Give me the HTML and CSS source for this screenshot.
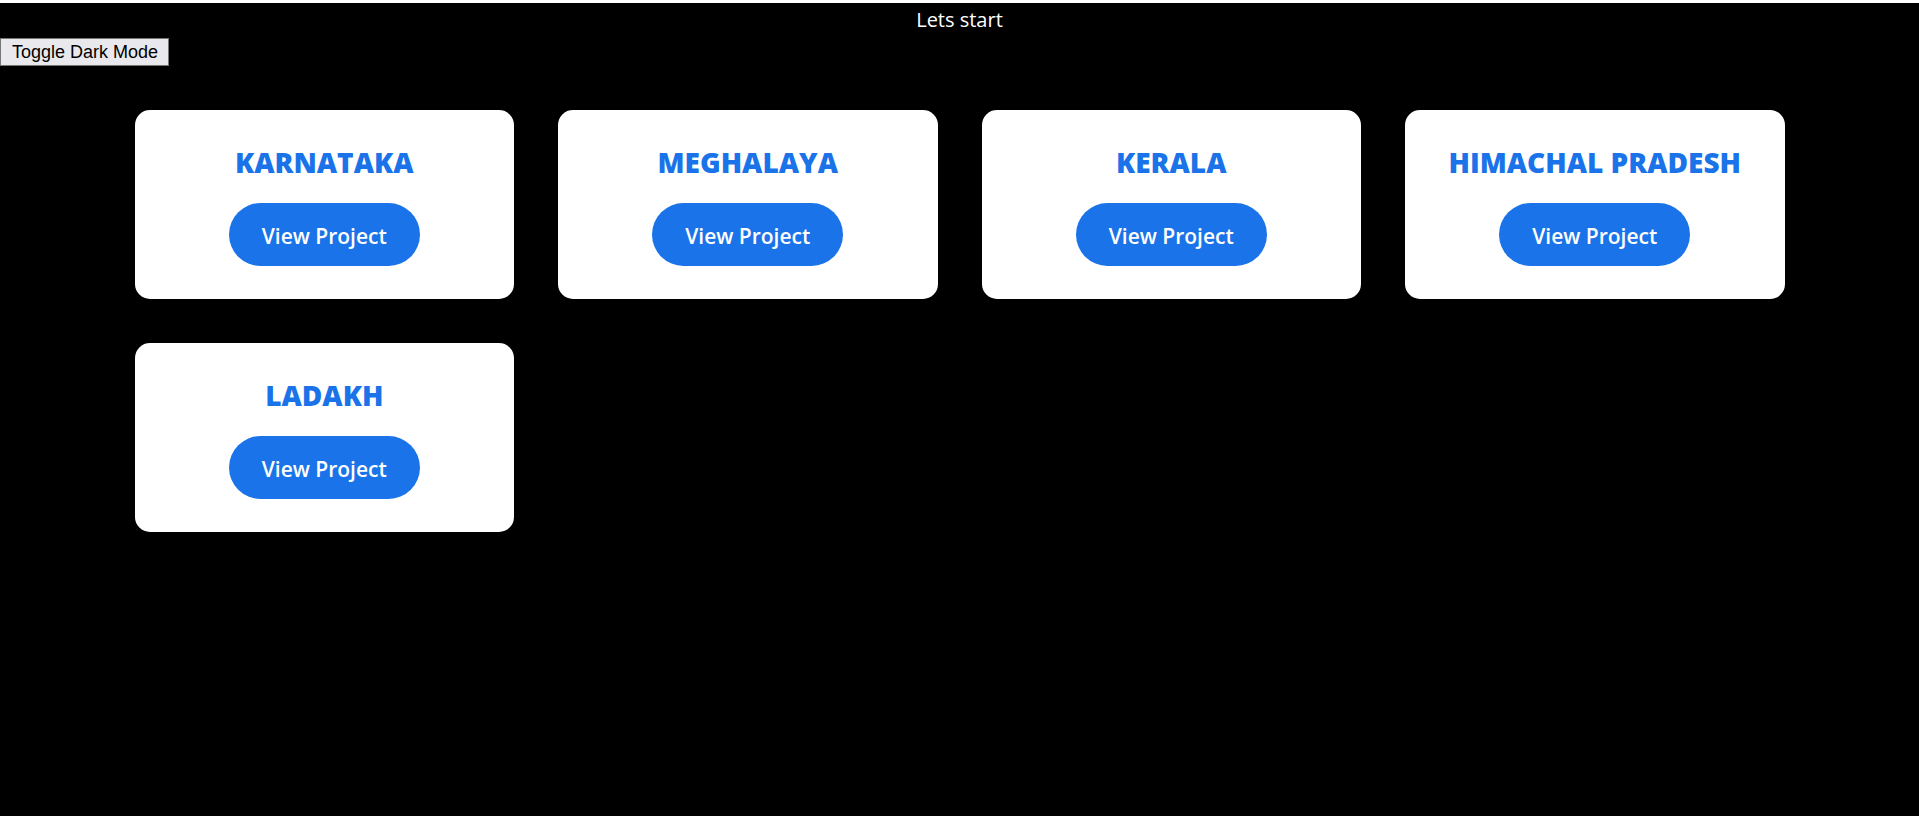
FILE: index.html
```html
<!DOCTYPE html>
<html lang="en">
<head>
<meta charset="utf-8">
<title>Lets start</title>
<link rel="stylesheet" href="styles.css">
</head>
<body class="dark">
  <div class="title">Lets start</div>
  <div class="toolbar"><button class="toggle" type="button">Toggle Dark Mode</button></div>
  <main class="grid">
    <section class="card">
      <h2 class="card-title">KARNATAKA</h2>
      <a class="btn" href="#">View Project</a>
    </section>
    <section class="card">
      <h2 class="card-title">MEGHALAYA</h2>
      <a class="btn" href="#">View Project</a>
    </section>
    <section class="card">
      <h2 class="card-title">KERALA</h2>
      <a class="btn" href="#">View Project</a>
    </section>
    <section class="card">
      <h2 class="card-title">HIMACHAL PRADESH</h2>
      <a class="btn" href="#">View Project</a>
    </section>
    <section class="card">
      <h2 class="card-title">LADAKH</h2>
      <a class="btn" href="#">View Project</a>
    </section>
  </main>
</body>
</html>
```

FILE: styles.css
```css
html, body {
  margin: 0;
  padding: 0;
}
body {
  background: #000;
  border-top: 3px solid #fff;
  min-height: calc(100vh - 3px);
  font-family: "Open Sans", "Noto Sans", sans-serif;
}
.title {
  color: #fff;
  text-align: center;
  font-size: 20px;
  line-height: 27px;
  padding-top: 3px;
}
.toolbar {
  margin-top: 5px;
  display: flex;
}
.toggle {
  font-family: "Liberation Sans", Arial, sans-serif;
  font-size: 18px;
  line-height: 20px;
  padding: 3px 10px 3px 11px;
  margin: 0;
  background: #e9e9ed;
  color: #000;
  border: 1px solid #767676;
  border-radius: 0;
}
.grid {
  display: grid;
  grid-template-columns: repeat(4, 379.5px);
  gap: 44px;
  justify-content: center;
  padding: 44px 0;
}
.card {
  background: #fff;
  border-radius: 15px;
  padding: 33px 20px;
  display: flex;
  flex-direction: column;
  align-items: center;
}
.card-title {
  margin: 0 0 22px 0;
  font-size: 28px;
  line-height: 38px;
  font-weight: 800;
  color: #1a73e8;
  text-align: center;
}
.btn {
  display: block;
  background: #1a73e8;
  color: #fff;
  text-decoration: none;
  font-size: 21px;
  font-weight: 600;
  line-height: 31px;
  padding: 18px 33px 14px;
  border-radius: 32px;
}
```
